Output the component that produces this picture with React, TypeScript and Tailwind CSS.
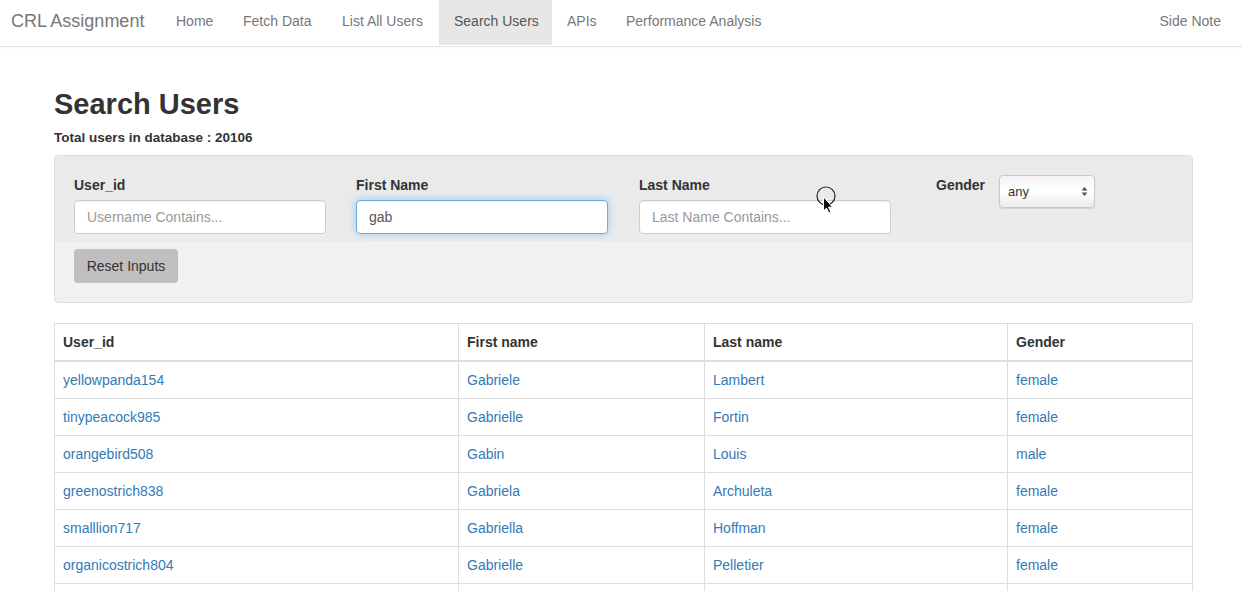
import React from "react";

const rows = [
  ["yellowpanda154", "Gabriele", "Lambert", "female"],
  ["tinypeacock985", "Gabrielle", "Fortin", "female"],
  ["orangebird508", "Gabin", "Louis", "male"],
  ["greenostrich838", "Gabriela", "Archuleta", "female"],
  ["smalllion717", "Gabriella", "Hoffman", "female"],
  ["organicostrich804", "Gabrielle", "Pelletier", "female"],
];

const navItems: [string, string][] = [
  ["Home", "w-[67px]"],
  ["Fetch Data", "w-[99px]"],
  ["List All Users", "w-[112px]"],
  ["Search Users", "w-[113px]"],
  ["APIs", "w-[59px]"],
  ["Performance Analysis", "w-[170px]"],
];

export default function App() {
  return (
    <div
      className="relative w-[1242px] h-[591px] overflow-hidden bg-white text-[14px] text-[#333]"
      style={{ fontFamily: '"Liberation Sans", Arial, sans-serif' }}
    >
      {/* Navbar */}
      <div className="flex h-[47px] items-start border-b border-[#e4e4e4] bg-white shadow-[0_1px_2px_rgba(0,0,0,0.04)]">
        <div className="h-[45px] w-[161px] pl-[11px] pt-[9px] text-[18px] leading-6 text-[#777]">CRL Assignment</div>
        {navItems.map(([n, w]) => (
          <div
            key={n}
            className={
              n === "Search Users"
                ? "h-[45px] bg-[#e7e7e7] pl-[15px] pt-[11px] leading-5 text-[#555] " + w
                : "h-[45px] pl-[15px] pt-[11px] leading-5 text-[#777] " + w
            }
          >
            {n}
          </div>
        ))}
        <div className="flex-1" />
        <div className="h-[45px] pl-[15px] pr-[21px] pt-[11px] leading-5 text-[#777]">Side Note</div>
      </div>

      <div className="ml-[54px] w-[1139px]">
        <h1 className="mt-[39px] text-[29px] font-semibold leading-[36px] text-[#333]">Search Users</h1>
        <div className="mt-[7px] text-[13.5px] font-bold leading-[18px]">Total users in database : 20106</div>

        {/* Filter panel */}
        <div className="mt-[8px] h-[148px] overflow-hidden rounded-[4px] border border-[#dedede] bg-[#f1f1f1] shadow-[inset_0_1px_1px_rgba(0,0,0,0.05)]">
          <div className="flex h-[86px] bg-gradient-to-b from-[#eaeaea] via-[#eaeaea] to-[#ececec] pl-[19px] pt-[19px]">
            <div className="w-[252px]">
              <div className="font-bold leading-5">User_id</div>
              <div className="mt-[5px] flex h-[34px] items-center rounded-[4px] border border-[#ccc] bg-white px-3 text-[#999] shadow-[inset_0_1px_1px_rgba(0,0,0,0.075)]">
                Username Contains...
              </div>
            </div>
            <div className="ml-[30px] w-[252px]">
              <div className="font-bold leading-5">First Name</div>
              <div className="mt-[5px] flex h-[34px] items-center rounded-[4px] border border-[#66afe9] bg-white px-3 text-[#555] shadow-[inset_0_1px_1px_rgba(0,0,0,0.075),0_0_8px_rgba(102,175,233,0.6)]">
                gab
              </div>
            </div>
            <div className="ml-[31px] w-[252px]">
              <div className="font-bold leading-5">Last Name</div>
              <div className="mt-[5px] flex h-[34px] items-center rounded-[4px] border border-[#ccc] bg-white px-3 text-[#999] shadow-[inset_0_1px_1px_rgba(0,0,0,0.075)]">
                Last Name Contains...
              </div>
            </div>
            <div className="ml-[45px] flex items-start">
              <div className="font-bold leading-5">Gender</div>
              <div className="ml-[14px] flex h-[33px] w-[96px] items-center justify-between rounded-[4px] border border-[#c9c9c9] bg-gradient-to-b from-[#f4f4f4] via-white to-[#ececec] pl-[8px] pr-[6px] text-[13px] text-[#333] shadow-[0_1px_1px_rgba(0,0,0,0.1)]">
                <span>any</span>
                <svg width="7" height="11" viewBox="0 0 7 11">
                  <path d="M3.5 1 L6.5 4.5 L0.5 4.5 Z" fill="#555" />
                  <path d="M3.5 10 L6.5 6.5 L0.5 6.5 Z" fill="#555" />
                </svg>
              </div>
            </div>
          </div>
          <div className="pl-[19px] pt-[7px]">
            <div className="flex h-[34px] w-[104px] items-center justify-center rounded-[4px] bg-[#bfbfbf] text-[#333]">
              Reset Inputs
            </div>
          </div>
        </div>

        {/* Table */}
        <table className="mt-[20px] w-[1139px] table-fixed border-collapse border border-[#ddd]">
          <thead>
            <tr>
              <th className="w-[404px] border border-b-2 border-[#ddd] px-2 py-2 text-left font-bold leading-5">User_id</th>
              <th className="w-[246px] border border-b-2 border-[#ddd] px-2 py-2 text-left font-bold leading-5">First name</th>
              <th className="w-[303px] border border-b-2 border-[#ddd] px-2 py-2 text-left font-bold leading-5">Last name</th>
              <th className="border border-b-2 border-[#ddd] px-2 py-2 text-left font-bold leading-5">Gender</th>
            </tr>
          </thead>
          <tbody>
            {rows.map((r) => (
              <tr key={r[0]}>
                {r.map((c, i) => (
                  <td key={i} className="border border-[#ddd] px-2 py-2 leading-5 text-[#337ab7]">
                    {c}
                  </td>
                ))}
              </tr>
            ))}
            <tr>
              <td className="h-[37px] border border-[#ddd]" />
              <td className="h-[37px] border border-[#ddd]" />
              <td className="h-[37px] border border-[#ddd]" />
              <td className="h-[37px] border border-[#ddd]" />
            </tr>
          </tbody>
        </table>
      </div>

      {/* Mouse cursor overlay */}
      <svg className="absolute left-[814px] top-[185px]" width="24" height="30" viewBox="0 0 24 30">
        <circle cx="12" cy="11" r="9" fill="none" stroke="#222" strokeWidth="1.2" />
        <path d="M9.5 12 L9.5 26 L12.5 23 L14.8 28 L16.8 27 L14.6 22.2 L18.5 22 Z" fill="#111" stroke="#fff" strokeWidth="1" />
      </svg>
    </div>
  );
}
